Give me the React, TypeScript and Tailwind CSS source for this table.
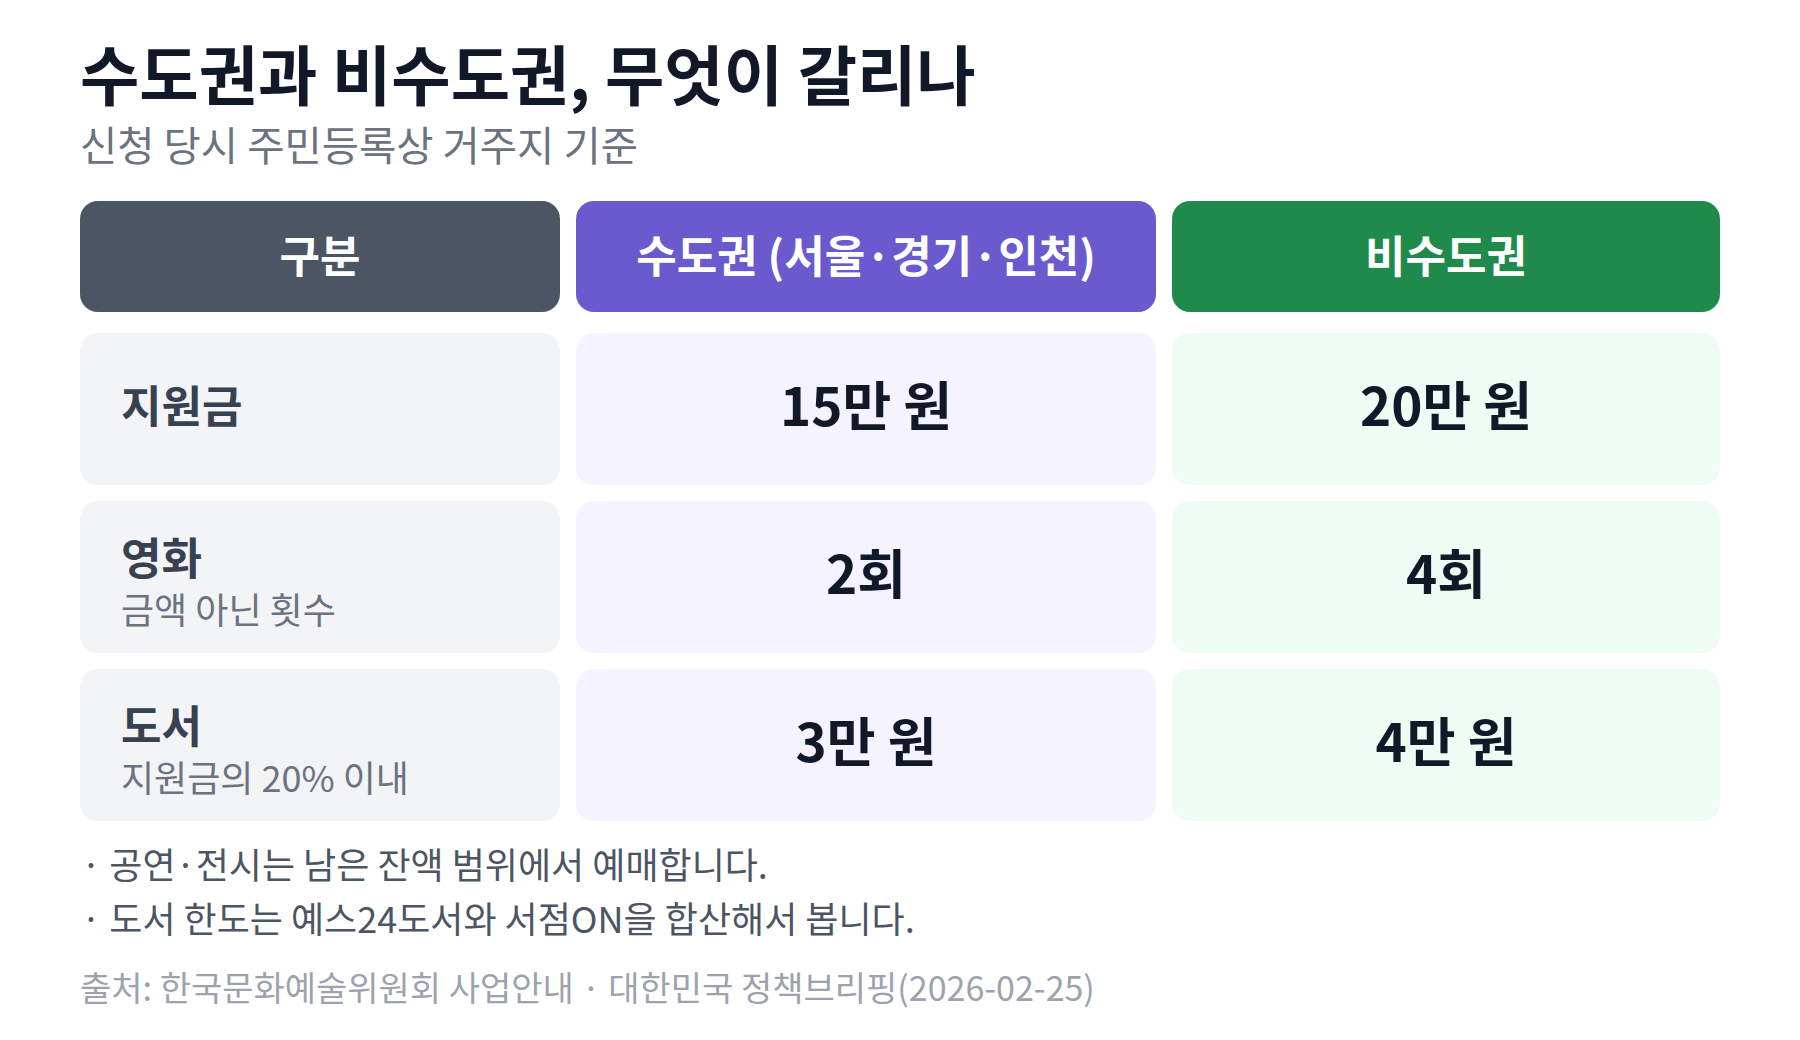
import React from "react";

const font = { fontFamily: '"Noto Sans CJK KR", "Noto Sans", sans-serif' };

const rows = [
  { label: "지원금", sub: "", a: "15만 원", b: "20만 원" },
  { label: "영화", sub: "금액 아닌 횟수", a: "2회", b: "4회" },
  { label: "도서", sub: "지원금의 20% 이내", a: "3만 원", b: "4만 원" },
];

export default function App() {
  return (
    <div className="w-[1800px] h-[1040px] bg-white px-[80px] pt-[34px]" style={font}>
      <h1 className="text-[64.5px] font-bold leading-[1.2] text-[#111827]">수도권과 비수도권, 무엇이 갈리나</h1>
      <p className="text-[40.5px] leading-[1.3] text-[#6b7280] mt-[7px]">신청 당시 주민등록상 거주지 기준</p>

      <div className="mt-[30px] grid grid-cols-[480px_580px_1fr] gap-x-[16px]">
        <div className="h-[111px] rounded-[18px] bg-[#4b5563] flex items-center justify-center pb-[6px] text-white text-[44px] font-bold">구분</div>
        <div className="h-[111px] rounded-[18px] bg-[#6a5acd] flex items-center justify-center pb-[6px] text-white text-[44px] font-bold">수도권 (서울·경기·인천)</div>
        <div className="h-[111px] rounded-[18px] bg-[#1f8a4c] flex items-center justify-center pb-[6px] text-white text-[44px] font-bold">비수도권</div>
      </div>

      <div className="mt-[21px] grid grid-cols-[480px_580px_1fr] gap-x-[16px] gap-y-[16px]">
        {rows.map((r) => (
          <React.Fragment key={r.label}>
            <div
              className={
                r.sub
                  ? "h-[152px] rounded-[18px] bg-[#f3f4f6] flex flex-col justify-center pl-[41px] pt-[8px]"
                  : "h-[152px] rounded-[18px] bg-[#f3f4f6] flex flex-col justify-center pl-[41px] pb-[10px]"
              }
            >
              <div className="text-[44px] font-bold leading-[1.2] text-[#374151]">{r.label}</div>
              {r.sub && <div className="text-[36px] leading-[1.3] mt-[2px] text-[#6b7280]">{r.sub}</div>}
            </div>
            <div className="h-[152px] rounded-[18px] bg-[#f5f3ff] flex items-center justify-center pb-[10px] text-[53px] font-bold text-[#111827]">{r.a}</div>
            <div className="h-[152px] rounded-[18px] bg-[#effcf3] flex items-center justify-center pb-[10px] text-[53px] font-bold text-[#111827]">{r.b}</div>
          </React.Fragment>
        ))}
      </div>

      <div className="mt-[15px] text-[36px] leading-[54px] text-[#4b5563] pl-[1px]">
        <div>· 공연·전시는 남은 잔액 범위에서 예매합니다.</div>
        <div>· 도서 한도는 예스24도서와 서점ON을 합산해서 봅니다.</div>
      </div>
      <div className="mt-[19px] text-[34px] leading-[1.4] text-[#9ca3af]">출처: 한국문화예술위원회 사업안내 · 대한민국 정책브리핑(2026-02-25)</div>
    </div>
  );
}
